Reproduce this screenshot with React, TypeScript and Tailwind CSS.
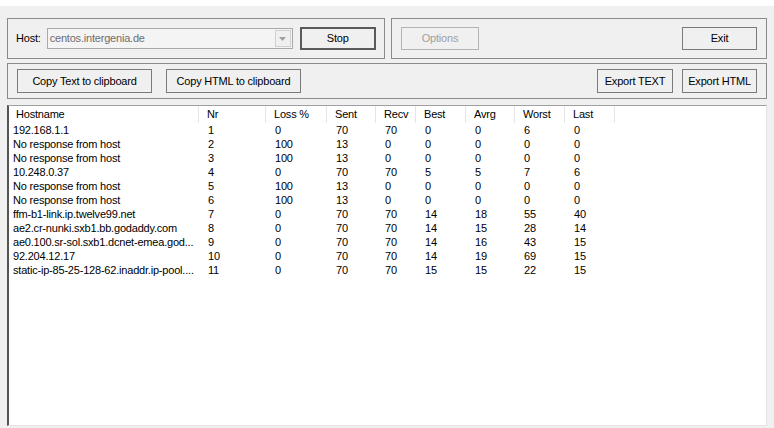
import React from 'react'

type Hop = {
  host: string
  nr: number
  loss: number
  sent: number
  recv: number
  best: number
  avrg: number
  worst: number
  last: number
}

const hops: Hop[] = [
  { host: '192.168.1.1', nr: 1, loss: 0, sent: 70, recv: 70, best: 0, avrg: 0, worst: 6, last: 0 },
  { host: 'No response from host', nr: 2, loss: 100, sent: 13, recv: 0, best: 0, avrg: 0, worst: 0, last: 0 },
  { host: 'No response from host', nr: 3, loss: 100, sent: 13, recv: 0, best: 0, avrg: 0, worst: 0, last: 0 },
  { host: '10.248.0.37', nr: 4, loss: 0, sent: 70, recv: 70, best: 5, avrg: 5, worst: 7, last: 6 },
  { host: 'No response from host', nr: 5, loss: 100, sent: 13, recv: 0, best: 0, avrg: 0, worst: 0, last: 0 },
  { host: 'No response from host', nr: 6, loss: 100, sent: 13, recv: 0, best: 0, avrg: 0, worst: 0, last: 0 },
  { host: 'ffm-b1-link.ip.twelve99.net', nr: 7, loss: 0, sent: 70, recv: 70, best: 14, avrg: 18, worst: 55, last: 40 },
  { host: 'ae2.cr-nunki.sxb1.bb.godaddy.com', nr: 8, loss: 0, sent: 70, recv: 70, best: 14, avrg: 15, worst: 28, last: 14 },
  { host: 'ae0.100.sr-sol.sxb1.dcnet-emea.god...', nr: 9, loss: 0, sent: 70, recv: 70, best: 14, avrg: 16, worst: 43, last: 15 },
  { host: '92.204.12.17', nr: 10, loss: 0, sent: 70, recv: 70, best: 14, avrg: 19, worst: 69, last: 15 },
  { host: 'static-ip-85-25-128-62.inaddr.ip-pool....', nr: 11, loss: 0, sent: 70, recv: 70, best: 15, avrg: 15, worst: 22, last: 15 },
]

const columns = [
  { label: 'Hostname', w: 'w-[190px]' },
  { label: 'Nr', w: 'w-[67px]' },
  { label: 'Loss %', w: 'w-[61px]' },
  { label: 'Sent', w: 'w-[49px]' },
  { label: 'Recv', w: 'w-[40px]' },
  { label: 'Best', w: 'w-[50px]' },
  { label: 'Avrg', w: 'w-[49px]' },
  { label: 'Worst', w: 'w-[50px]' },
  { label: 'Last', w: 'w-[50px]' },
]

function Button({ children, className = '', disabled = false, isDefault = false }: {
  children: React.ReactNode
  className?: string
  disabled?: boolean
  isDefault?: boolean
}) {
  return (
    <div
      className={`flex h-[23px] items-center justify-center whitespace-nowrap bg-[#f0f0f0] ${
        isDefault ? 'border-2 border-[#5a5a5a]' : disabled ? 'border border-[#b4b4b4] text-[#a0a0a0]' : 'border border-[#7a7a7a]'
      } ${className}`}
    >
      {children}
    </div>
  )
}

export default function App() {
  return (
    <div className="h-[428px] w-[774px] overflow-hidden bg-[#f0f0f0] font-['Liberation_Sans',Arial,sans-serif] text-[11px] tracking-[-0.2px] text-black">
      <div className="h-[6px] bg-white" />
      <div className="px-[7px] pt-[12px]">
        {/* host + controls */}
        <div className="flex gap-[6px]">
          <div className="flex h-[41px] w-[378px] items-center border border-[#8a8a8a] pl-[8px]">
            <span>Host:</span>
            <div className="ml-[6px] flex h-[21px] w-[246px] items-center border border-[#a8a8a8] bg-[#f4f4f4] pr-[1px]">
              <span className="flex-1 pl-[2px] text-[#6d6d6d]">centos.intergenia.de</span>
              <span className="flex h-[17px] w-[16px] items-center justify-center border border-[#d0d0d0] bg-[#f0f0f0]">
                <svg width="7" height="4" viewBox="0 0 7 4">
                  <path d="M0 0h7L3.5 4z" fill="#a0a0a0" />
                </svg>
              </span>
            </div>
            <Button isDefault className="ml-[7px] w-[76px]">Stop</Button>
          </div>
          <div className="flex h-[41px] flex-1 items-center justify-between border border-[#8a8a8a] px-[9px]">
            <Button disabled className="w-[78px]">Options</Button>
            <Button className="w-[75px]">Exit</Button>
          </div>
        </div>

        {/* export buttons */}
        <div className="mt-[4px] flex h-[36px] items-center border border-[#8a8a8a] px-[9px]">
          <Button className="h-[24px] w-[135px]">Copy Text to clipboard</Button>
          <Button className="ml-[14px] h-[24px] w-[135px]">Copy HTML to clipboard</Button>
          <div className="flex-1" />
          <Button className="h-[24px] w-[76px]">Export TEXT</Button>
          <Button className="ml-[9px] h-[24px] w-[75px]">Export HTML</Button>
        </div>

        {/* result list */}
        <div className="mt-[6px] h-[321px] border-b border-l-2 border-r border-t border-b-[#e3e3e3] border-l-[#555] border-r-[#e3e3e3] border-t-[#a0a0a0] bg-white">
          <div className="flex h-[17px] items-center">
            {columns.map((c, i) => (
              <div
                key={c.label}
                className={`${c.w} h-full border-r border-[#e5e5e5] leading-[17px] ${i === 0 ? 'pl-[7px]' : 'pl-[8px]'}`}
              >
                {c.label}
              </div>
            ))}
          </div>
          {hops.map((h, idx) => (
            <div key={idx} className="flex h-[14px] leading-[14px]">
              <div className="w-[190px] overflow-hidden whitespace-nowrap pl-[4px]">{h.host}</div>
              <div className="w-[67px] pl-[9px]">{h.nr}</div>
              <div className="w-[61px] pl-[9px]">{h.loss}</div>
              <div className="w-[49px] pl-[9px]">{h.sent}</div>
              <div className="w-[40px] pl-[9px]">{h.recv}</div>
              <div className="w-[50px] pl-[9px]">{h.best}</div>
              <div className="w-[49px] pl-[9px]">{h.avrg}</div>
              <div className="w-[50px] pl-[9px]">{h.worst}</div>
              <div className="w-[50px] pl-[9px]">{h.last}</div>
            </div>
          ))}
        </div>
      </div>
    </div>
  )
}
